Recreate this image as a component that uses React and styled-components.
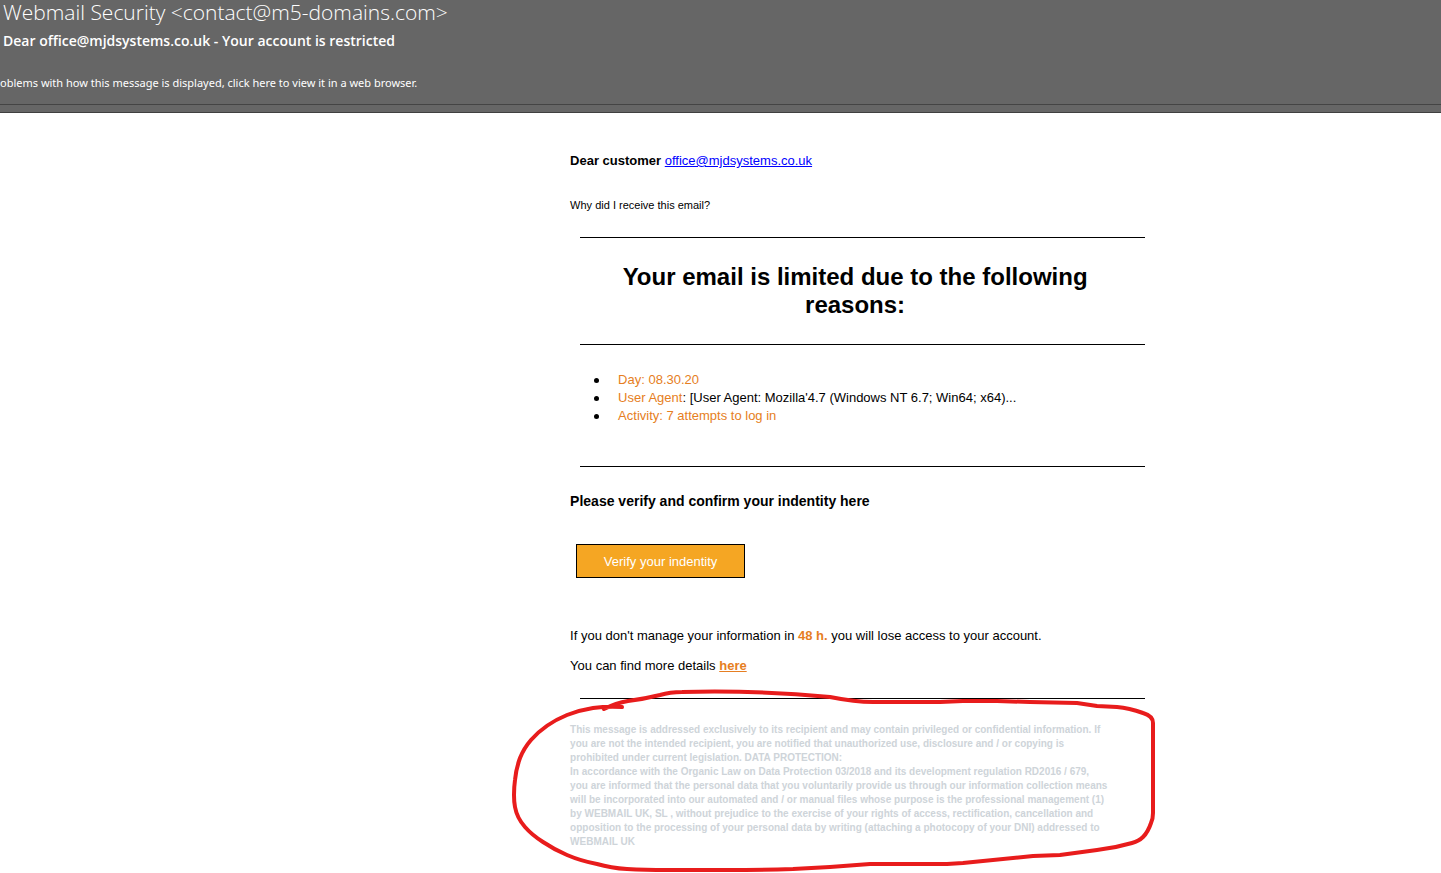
import React from "react";
import styled, { createGlobalStyle } from "styled-components";

const GlobalStyle = createGlobalStyle`
  * {
    box-sizing: border-box;
  }
  body {
    margin: 0;
    background-color: white;
    color: black;
    font-family: "Liberation Sans", Arial, sans-serif;
    font-size: 13px;
    line-height: 18px;
  }
`;

const Header = styled.header`
  background-color: #666666;
  color: white;
  font-family: "Open Sans", "Segoe UI", sans-serif;
  border-bottom: 1px solid #3f3f3f;
  padding-bottom: 7px;
`;

const HeaderText = styled.div`
  border-bottom: 1px solid #444444;
  padding-bottom: 13px;
`;

const Sender = styled.div`
  padding-left: 3px;
  font-size: 21px;
  font-weight: 300;
  line-height: 24px;
`;

const Subject = styled.h1`
  margin: 0;
  padding: 6px 0 0 3px;
  font-size: 14px;
  font-weight: 600;
  line-height: 22px;
`;

const InfoBar = styled.div`
  padding-top: 23px;
  font-family: "Noto Sans", "Segoe UI", sans-serif;
  font-size: 11px;
  line-height: 16px;
`;

const Page = styled.main`
  display: grid;
  grid-template-columns: minmax(0, 36fr) minmax(0, 570px) minmax(0, 19fr);
`;

const Message = styled.article`
  grid-column: 2;
  padding: 39px 0 24px;
`;

const Text = styled.p`
  margin: 0 0 ${(props) => props.$gap || 12}px;
  font-size: ${(props) => props.$size || 13}px;
  font-weight: ${(props) => (props.$bold ? "bold" : "normal")};
`;

const Rule = styled.hr`
  margin: 0 -5px 0 10px;
  border: none;
  border-top: 1px solid black;
`;

const Title = styled.h2`
  margin: 0;
  padding: 25px 40px;
  font-size: 24px;
  line-height: 28px;
  text-align: center;
`;

const Reasons = styled.ul`
  margin: 0;
  padding: 26px 0 41px 24px;
  list-style: none;
`;

const Reason = styled.li`
  display: flex;
  align-items: center;
  &::before {
    content: "";
    width: 5px;
    height: 5px;
    margin-right: 19px;
    border-radius: 50%;
    background-color: black;
  }
`;

const Orange = styled.span`
  color: #e67e22;
  font-weight: ${(props) => (props.$bold ? "bold" : "normal")};
`;

const MailLink = styled.a`
  color: #0000ff;
  font-weight: normal;
`;

const MoreLink = styled.a`
  color: #e67e22;
  font-weight: bold;
`;

const Subtitle = styled.h3`
  margin: 0;
  padding: 25px 0 34px;
  font-size: 14px;
`;

const VerifyBtn = styled.button`
  display: block;
  margin: 0 0 49px 6px;
  padding: 0 25px;
  height: 34px;
  min-width: 169px;
  background-color: #f5a623;
  color: white;
  border: 1px solid black;
  font-family: inherit;
  font-size: 13px;
`;

const Disclaimer = styled.section`
  position: relative;
  padding-top: 24px;
  color: #ced4d9;
  font-size: 10px;
  font-weight: bold;
  line-height: 14px;
`;

const Line = styled.span`
  display: block;
  white-space: nowrap;
`;

const Marker = styled.svg`
  position: absolute;
  top: -14px;
  left: -60px;
  pointer-events: none;
`;

const reasons = [
  { label: "Day: 08.30.20" },
  {
    label: "User Agent",
    detail: ": [User Agent: Mozilla'4.7 (Windows NT 6.7; Win64; x64)...",
  },
  { label: "Activity: 7 attempts to log in" },
];

const disclaimer = [
  "This message is addressed exclusively to its recipient and may contain privileged or confidential information. If",
  "you are not the intended recipient, you are notified that unauthorized use, disclosure and / or copying is",
  "prohibited under current legislation. DATA PROTECTION:",
  "In accordance with the Organic Law on Data Protection 03/2018 and its development regulation RD2016 / 679,",
  "you are informed that the personal data that you voluntarily provide us through our information collection means",
  "will be incorporated into our automated and / or manual files whose purpose is the professional management (1)",
  "by WEBMAIL UK, SL , without prejudice to the exercise of your rights of access, rectification, cancellation and",
  "opposition to the processing of your personal data by writing (attaching a photocopy of your DNI) addressed to",
  "WEBMAIL UK",
];

const RedCircle = () => (
  <Marker width="650" height="188" viewBox="0 0 650 188" aria-hidden="true">
    <path
      d="M94 24 Q106 18 118 16 Q134 14 150 10 Q160 7 172 7 Q245 5 320 12 Q345 17 363 17 H430 L453 16 H487 L520 17 L567 18 L587 21 L607 22 Q619 23 633 28 Q643 31 643 38 V128 Q643 134 641 138 Q638 147 633 152 Q629 156 622 158 Q605 163 587 165 L550 170 L523 171 L453 178 L437 179 H360 L320 182 L283 184 Q250 185 217 185 H157 Q135 185 117 184 Q101 183 87 179 Q71 176 57 170 Q45 165 33 157 Q22 150 15 142 Q7 133 5 122 Q4 117 4 110 Q4 102 5 95 Q6 84 10 73 Q14 63 21 55 Q35 39 57 30 Q70 25 83 23 Q98 21 112 22"
      fill="none"
      stroke="#e81c1c"
      strokeWidth="4"
      strokeLinecap="round"
      strokeLinejoin="round"
    />
  </Marker>
);

const App = () => {
  return (
    <>
      <GlobalStyle />
      <Header>
        <HeaderText>
          <Sender>Webmail Security &lt;contact@m5-domains.com&gt;</Sender>
          <Subject>
            Dear office@mjdsystems.co.uk - Your account is restricted
          </Subject>
          <InfoBar>
            oblems with how this message is displayed, click here to view it in
            a web browser.
          </InfoBar>
        </HeaderText>
      </Header>
      <Page>
        <Message>
          <Text $bold $gap={26}>
            Dear customer <MailLink href="#">office@mjdsystems.co.uk</MailLink>
          </Text>
          <Text $size={11} $gap={23}>
            Why did I receive this email?
          </Text>
          <Rule />
          <Title>Your email is limited due to the following reasons:</Title>
          <Rule />
          <Reasons>
            {reasons.map((reason) => (
              <Reason key={reason.label}>
                <Orange>{reason.label}</Orange>
                {reason.detail}
              </Reason>
            ))}
          </Reasons>
          <Rule />
          <Subtitle>Please verify and confirm your indentity here</Subtitle>
          <VerifyBtn type="button">Verify your indentity</VerifyBtn>
          <Text>
            If you don't manage your information in <Orange $bold>48 h.</Orange>{" "}
            you will lose access to your account.
          </Text>
          <Text $gap={23}>
            You can find more details <MoreLink href="#">here</MoreLink>
          </Text>
          <Rule />
          <Disclaimer>
            {disclaimer.map((line) => (
              <Line key={line}>{line}</Line>
            ))}
            <RedCircle />
          </Disclaimer>
        </Message>
      </Page>
    </>
  );
};

export default App;
